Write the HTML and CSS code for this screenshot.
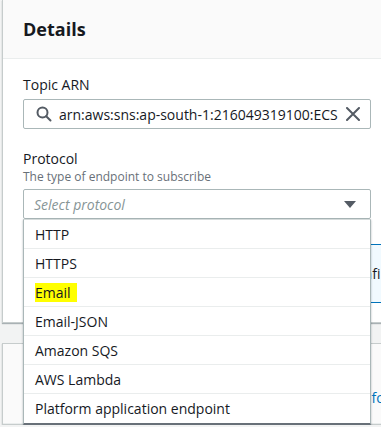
FILE: index.html
```html
<!DOCTYPE html>
<html lang="en">
<head>
    <meta charset="UTF-8">
    <meta name="viewport" content="width=device-width, initial-scale=1.0">
    <title>Create subscription</title>
    <link rel="stylesheet" href="styles.css">
</head>
<body>

    <div class="page">
        <div class="panel">
            <div class="panel-header">
                <h2>Details</h2>
            </div>

            <div class="panel-body">
                <div class="form-group">
                    <label for="topicArn">Topic ARN</label>
                    <div class="search-input">
                        <svg class="search-icon" width="16" height="16" viewBox="0 0 16 16">
                            <circle cx="6.5" cy="6.5" r="5" fill="none" stroke="#545b64" stroke-width="2"/>
                            <line x1="10.2" y1="10.2" x2="14.5" y2="14.5" stroke="#545b64" stroke-width="2" stroke-linecap="round"/>
                        </svg>
                        <input type="text" id="topicArn" value="arn:aws:sns:ap-south-1:216049319100:ECS">
                        <svg class="clear-icon" width="14" height="14" viewBox="0 0 14 14">
                            <path d="M1 1 L13 13 M13 1 L1 13" stroke="#545b64" stroke-width="2" stroke-linecap="round"/>
                        </svg>
                    </div>
                </div>

                <div class="form-group">
                    <label>Protocol</label>
                    <div class="description">The type of endpoint to subscribe</div>
                    <div class="select-wrap">
                        <div class="select-box">
                            <span class="placeholder">Select protocol</span>
                            <svg class="caret" width="12" height="8" viewBox="0 0 12 8">
                                <path d="M0 0 H12 L6 7 Z" fill="#545b64"/>
                            </svg>
                        </div>

                        <ul class="options">
                            <li>HTTP</li>
                            <li>HTTPS</li>
                            <li><mark>Email</mark></li>
                            <li>Email-JSON</li>
                            <li>Amazon SQS</li>
                            <li>AWS Lambda</li>
                            <li>Platform application endpoint</li>
                        </ul>
                    </div>
                </div>

                <div class="alert">
                    <span class="alert-text">After your subscription is created, you must confirm it.</span>
                </div>
            </div>
        </div>

        <div class="panel panel-second">
            <div class="panel-header">
                <h3>Subscription filter policy - <em>optional</em></h3>
                <a href="#" class="info-link">Info</a>
            </div>
        </div>
    </div>

</body>
</html>
```

FILE: styles.css
```css
* {
    margin: 0;
    padding: 0;
    box-sizing: border-box;
}

body {
    font-family: 'Open Sans', 'Noto Sans', sans-serif;
    background-color: #f2f3f3;
    color: #16191f;
    font-size: 14px;
    overflow: hidden;
}

.page {
    padding-left: 2px;
    width: 700px;
}

.panel {
    background: #fff;
    border: 1px solid #c6cccc;
    border-top: none;
    box-shadow: 0 1px 1px rgba(0, 28, 36, 0.3);
}

.panel-header {
    background: #fafafa;
    height: 59px;
    border-bottom: 1px solid #eaeded;
    padding: 0 20px;
    display: flex;
    align-items: center;
}

.panel-header h2 {
    font-size: 18px;
    font-weight: 700;
    line-height: 22px;
    margin-top: -1px;
}

.panel-body {
    padding: 15px 20px 19px;
}

.form-group {
    margin-bottom: 19px;
}

label {
    display: block;
    font-size: 14px;
    line-height: 21px;
    margin-bottom: 4px;
}

.description {
    font-size: 12px;
    line-height: 16px;
    color: #687078;
    margin-top: -4px;
    margin-bottom: 4px;
}

.search-input {
    width: 348px;
    height: 30px;
    border: 1px solid #aab7b8;
    border-radius: 2px;
    display: flex;
    align-items: center;
    padding: 0 10px 0 12px;
}

.search-icon {
    flex-shrink: 0;
}

.search-input input {
    flex: 1;
    min-width: 0;
    border: none;
    outline: none;
    font-family: inherit;
    font-size: 14px;
    color: #16191f;
    margin-left: 7px;
    background: transparent;
}

.clear-icon {
    flex-shrink: 0;
    margin-left: 8px;
}

.select-wrap {
    position: relative;
    width: 348px;
}

.select-box {
    height: 30px;
    border: 1px solid #aab7b8;
    border-radius: 2px;
    display: flex;
    align-items: center;
    justify-content: space-between;
    padding: 0 14px 0 10px;
}

.placeholder {
    font-style: italic;
    color: #879596;
}

.caret {
    margin-top: 1px;
}

.options {
    position: absolute;
    top: 100%;
    left: 0;
    width: 348px;
    list-style: none;
    background: #fff;
    border: 1px solid #aab7b8;
    border-top-color: #d5dbdb;
    border-bottom: 2px solid #687078;
    box-shadow: 0 1px 2px rgba(0, 28, 36, 0.3);
    z-index: 10;
}

.options li {
    height: 29px;
    line-height: 28px;
    padding: 1px 11px 0;
    border-bottom: 1px solid #eaeded;
}

.options li:last-child {
    border-bottom: none;
}

mark {
    background: #ffff00;
    color: #16191f;
    padding-right: 6px;
}

.alert {
    margin-top: 25px;
    height: 59px;
    border: 1px solid #0073bb;
    background: #f1faff;
    display: flex;
    align-items: center;
    padding-left: 36px;
}

.panel-second {
    margin-top: 20px;
    border-top: 1px solid #c6cccc;
}

.panel-second .panel-header {
    height: 80px;
    background: #fafafa;
    align-items: flex-start;
    padding-top: 43px;
}

.panel-second h3 {
    font-size: 18px;
    font-weight: 700;
    width: 334px;
    white-space: nowrap;
    overflow: hidden;
}

.panel-second em {
    font-weight: 400;
}

.info-link {
    color: #0073bb;
    font-weight: 400;
    font-size: 14px;
    text-decoration: none;
    line-height: 22px;
    margin-left: 2px;
}
```
